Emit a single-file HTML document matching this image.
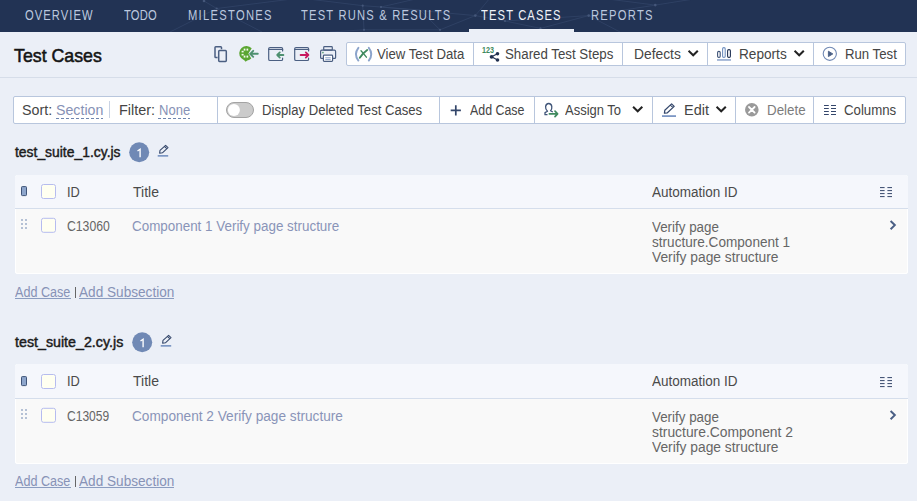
<!DOCTYPE html>
<html><head><meta charset="utf-8">
<style>
*{box-sizing:border-box;margin:0;padding:0}
html,body{width:917px;height:501px;overflow:hidden;background:#ebeff7;font-family:"Liberation Sans",sans-serif;color:#333}
#nav{position:absolute;left:0;top:0;width:917px;height:32px;background:#223354;overflow:hidden}
.t{position:absolute;white-space:nowrap;font-size:14px;line-height:16px;transform-origin:0 0}
.nv{color:#bcc8df;top:7px}
.act{color:#f0f3f9}
#ul{position:absolute;left:469px;top:29px;width:105px;height:3px;background:#ebeff7}
#sep{position:absolute;left:0;top:77px;width:917px;height:1px;background:#d6dde9}
.grp{position:absolute;background:#fff;border:1px solid #b8c6dd;border-radius:2px}
.dv{position:absolute;width:1px;background:#b8c6dd}
.tb{color:#454545}
.lnk{color:#8792b6}
.dash{position:absolute;height:1px;background:repeating-linear-gradient(90deg,#6f86b0 0 3px,transparent 3px 5px)}
.tbl{position:absolute;left:15px;width:893px;background:#f9f9f9;border-radius:3px;overflow:hidden;box-shadow:inset 1px 0 #fff,inset -1px 0 #fff,inset 0 -1px #fff}
.th{position:absolute;left:0;top:0;width:100%;height:33px;background:#f5f7fc;border-bottom:1px solid #d5deec}
.hd{color:#4a4a4a}
.gr{color:#666}
.cl{color:#8994b8}
.sh{font-size:14.5px;color:#1b1b1b;-webkit-text-stroke:0.45px #1b1b1b}
.ck{position:absolute;width:15px;height:15px;border:1px solid #b7bdee;background:#fffff2;border-radius:2px}
svg{position:absolute;overflow:visible}
.abs{position:absolute}
.ul2{height:1px;background:#8a9cc0}
</style></head><body>
<div id="nav">
  <svg style="left:0;top:0" width="917" height="32">
    <g stroke="#34466a" stroke-width="0.7" fill="none">
      <path d="M204 1 L216.7 8.5 L170 32 M216.7 8.5 L300 -2 M216.7 8.5 L262 32 M300 -2 L362.7 5.7 L381 7 L475.3 15.6 L505 21 L540.5 28.4 M362.7 5.7 L364 29.8 L440 29.8 L475.3 15.6 L490 -2 M381 7 L420 -2 M364 29.8 L330 32 M505 21 L588.7 15.6 L655.3 5.1 L700 -2 M588.7 15.6 L540.5 28.4 M588.7 15.6 L620 32 M655.3 5.1 L600 -2 M440 29.8 L420 10 L381 7"/>
    </g>
    <g fill="#45577a">
      <circle cx="204" cy="1" r="1.3"/><circle cx="216.7" cy="8.5" r="1.1"/><circle cx="362.7" cy="5.7" r="1.1"/><circle cx="381" cy="7" r="1.1"/><circle cx="364" cy="29.8" r="1.1"/><circle cx="475.3" cy="15.6" r="1.3"/><circle cx="505" cy="21" r="1.1"/><circle cx="540.5" cy="28.4" r="1.1"/><circle cx="588.7" cy="15.6" r="1.3"/><circle cx="655.3" cy="5.1" r="1.3"/><circle cx="440" cy="29.8" r="1.1"/>
    </g>
  </svg>
  <div class="t nv" style="left:25px;letter-spacing:1.34px;transform:scaleX(0.8)">OVERVIEW</div>
  <div class="t nv" style="left:124px;letter-spacing:0.23px;transform:scaleX(0.8)">TODO</div>
  <div class="t nv" style="left:188px;letter-spacing:1.6px;transform:scaleX(0.8)">MILESTONES</div>
  <div class="t nv" style="left:301px;letter-spacing:1.49px;transform:scaleX(0.8)">TEST RUNS &amp; RESULTS</div>
  <div class="t nv act" style="left:481px;letter-spacing:1.4px;transform:scaleX(0.8)">TEST CASES</div>
  <div class="t nv" style="left:591px;letter-spacing:1.58px;transform:scaleX(0.8)">REPORTS</div>
  <div id="ul"></div>
</div>
<div class="t" style="left:14px;top:45px;font-size:19px;line-height:21px;color:#141414;-webkit-text-stroke:0.55px #141414;transform:scaleX(0.935)">Test Cases</div>
<div id="sep"></div>

<!-- top button group -->
<div class="grp" style="left:346px;top:42px;width:560px;height:24px"></div>
<div class="dv" style="left:473px;top:43px;height:22px"></div>
<div class="dv" style="left:622px;top:43px;height:22px"></div>
<div class="dv" style="left:707px;top:43px;height:22px"></div>
<div class="dv" style="left:813px;top:43px;height:22px"></div>
<div class="t tb" style="left:377px;top:46px;transform:scaleX(0.94)">View Test Data</div>
<div class="t tb" style="left:505px;top:46px;transform:scaleX(0.949)">Shared Test Steps</div>
<div class="t tb" style="left:634px;top:46px;transform:scaleX(0.986)">Defects</div>
<div class="t tb" style="left:739px;top:46px;transform:scaleX(0.973)">Reports</div>
<div class="t tb" style="left:845px;top:46px;transform:scaleX(0.942)">Run Test</div>

<!-- toolbar 2 -->
<div class="grp" style="left:13px;top:96px;width:893px;height:28px"></div>
<div class="dv" style="left:109px;top:101px;height:17px;background:#c9d3e4"></div>
<div class="dv" style="left:217px;top:97px;height:26px"></div>
<div class="dv" style="left:439px;top:97px;height:26px"></div>
<div class="dv" style="left:534px;top:97px;height:26px"></div>
<div class="dv" style="left:652px;top:97px;height:26px"></div>
<div class="dv" style="left:735px;top:97px;height:26px"></div>
<div class="dv" style="left:813px;top:97px;height:26px"></div>
<div class="t tb" style="left:22px;top:102px;transform:scaleX(1.018)">Sort:</div>
<div class="t lnk" style="left:56px;top:102px;transform:scaleX(1.013)">Section</div>
<div class="dash" style="left:56px;top:118px;width:47px"></div>
<div class="t tb" style="left:119px;top:102px;transform:scaleX(1.03)">Filter:</div>
<div class="t lnk" style="left:159px;top:102px;transform:scaleX(0.93)">None</div>
<div class="dash" style="left:158px;top:118px;width:32px"></div>
<div class="t tb" style="left:262px;top:102px;transform:scaleX(0.937)">Display Deleted Test Cases</div>
<div class="t tb" style="left:470px;top:102px;transform:scaleX(0.885)">Add Case</div>
<div class="t tb" style="left:565px;top:102px;transform:scaleX(0.928)">Assign To</div>
<div class="t tb" style="left:684px;top:102px;transform:scaleX(1.033)">Edit</div>
<div class="t" style="left:767px;top:102px;color:#7c7c7c;transform:scaleX(0.953)">Delete</div>
<div class="t tb" style="left:844px;top:102px;transform:scaleX(0.945)">Columns</div>


<svg style="left:0;top:0;z-index:5" width="917" height="501">
 <!-- copy -->
 <g fill="none" stroke="#4b5f82" stroke-width="1.5" stroke-linecap="butt">
  <path d="M217.6 57.5 H215.8 Q215 57.5 215 56.7 V47.6 Q215 46.8 215.8 46.8 H220.7 Q221.5 46.8 221.5 47.6 V49.2"/>
  <rect x="218.7" y="50.6" width="7.6" height="10.8" rx="0.8"/>
 </g>
 <!-- cucumber -->
 <path d="M251.7 48.3 A7.2 7.2 0 1 0 251.3 58.5 L248.4 53.6 Z" fill="#5ba632"/>
 <path d="M243.6 59.4 L245.6 61.7 L248.6 59.2 Z" fill="#5ba632"/>
 <g fill="#f4faee"><rect x="243.7" y="48.6" width="1.7" height="2"/><rect x="246.5" y="48.6" width="1.7" height="2"/><rect x="241.6" y="50.8" width="2" height="1.6"/><rect x="241.6" y="53.9" width="2" height="1.6"/><rect x="243.7" y="55.6" width="1.7" height="2"/><rect x="246.5" y="55.6" width="1.7" height="2"/></g>
 <g fill="none" stroke="#4e9070" stroke-width="1.9" stroke-linecap="round" stroke-linejoin="round"><path d="M257.8 53.8 H250.4 M253.2 50.8 L250.2 53.8 L253.2 56.8"/></g>
 <!-- import -->
 <g fill="none" stroke="#4b5f82" stroke-width="1.2" stroke-linecap="round">
  <path d="M282.6 51 V48.8 Q282.6 47.5 281.3 47.5 H270 Q268.7 47.5 268.7 48.8 V59.2 Q268.7 60.5 270 60.5 H281.3 Q282.6 60.5 282.6 59.2 V58.2"/>
  <path d="M268.7 49.4 H282.6"/>
 </g>
 <g fill="none" stroke="#4e9070" stroke-width="1.8" stroke-linecap="round" stroke-linejoin="round"><path d="M283.4 55 H277.2 M279.8 52.4 L277.2 55 L279.8 57.6"/></g>
 <!-- export -->
 <g fill="none" stroke="#4b5f82" stroke-width="1.2" stroke-linecap="round">
  <path d="M308.6 51 V48.8 Q308.6 47.5 307.3 47.5 H296 Q294.7 47.5 294.7 48.8 V59.2 Q294.7 60.5 296 60.5 H307.3 Q308.6 60.5 308.6 59.2 V58.2"/>
  <path d="M294.7 49.4 H308.6"/>
 </g>
 <g fill="none" stroke="#c8175f" stroke-width="1.8" stroke-linecap="round" stroke-linejoin="round"><path d="M300.6 55 H308.4 M305.8 52.4 L308.4 55 L305.8 57.6"/></g>
 <!-- printer -->
 <g fill="none" stroke="#4b5f82" stroke-width="1.2" stroke-linejoin="round">
  <rect x="323.7" y="46.6" width="8.6" height="3.6" rx="0.8"/>
  <path d="M323.4 58.4 H321.6 Q320.6 58.4 320.6 57.4 V51.4 Q320.6 50.2 321.8 50.2 H334.4 Q335.6 50.2 335.6 51.4 V57.4 Q335.6 58.4 334.6 58.4 H332.6"/>
  <rect x="323.4" y="55.2" width="9.2" height="6.2" rx="0.8" fill="#fff"/>
 </g>
 <path d="M325.3 57.8 H330.7 M325.3 59.6 H330.7" stroke="#7b96c4" stroke-width="0.9"/>
 <path d="M322 52.6 H323.8 M322.9 51.7 V53.5" stroke="#5aa07a" stroke-width="0.8"/>
 <!-- (x) -->
 <g fill="none" stroke="#8ca4cb" stroke-width="1.9" stroke-linecap="round">
  <path d="M358.4 47.8 Q353.4 54.2 358.4 60.6"/><path d="M368.8 47.8 Q373.8 54.2 368.8 60.6"/>
 </g>
 <path d="M359.8 57.8 Q363.5 52.5 367.2 50" fill="none" stroke="#3f8a5e" stroke-width="1.9" stroke-linecap="round"/>
 <path d="M361 50.8 Q363.5 53.5 366.4 57.2" fill="none" stroke="#3f8a5e" stroke-width="1.3" stroke-linecap="round"/>
 <!-- 123 share -->
 <text x="482" y="53.2" font-family="Liberation Sans" font-weight="bold" font-size="8.4" fill="#3f8a5e" textLength="12" lengthAdjust="spacingAndGlyphs">123</text>
 <g stroke="#1f2e4e" stroke-width="1.1"><path d="M491.6 56.8 L497.5 53.7 M491.6 56.8 L497.5 60"/></g>
 <g fill="#1f2e4e"><circle cx="491.6" cy="56.8" r="1.9"/><circle cx="497.5" cy="53.7" r="1.8"/><circle cx="497.5" cy="60" r="1.8"/></g>
 <!-- chevrons -->
 <g fill="none" stroke="#222" stroke-width="2" stroke-linecap="square" stroke-linejoin="miter">
  <path d="M689.3 51.4 L693.2 55.3 L697.1 51.4"/>
  <path d="M795.3 51.4 L799.2 55.3 L803.1 51.4"/>
  <path d="M633.8 107.4 L637.7 111.3 L641.6 107.4"/>
  <path d="M717.3 107.4 L721.2 111.3 L725.1 107.4"/>
 </g>
 <!-- reports bars -->
 <rect x="717.6" y="51.4" width="2.6" height="6" rx="1.2" fill="none" stroke="#3f5478" stroke-width="1.1"/>
 <rect x="722.6" y="47.6" width="2.6" height="9.8" rx="1.2" fill="none" stroke="#7090c0" stroke-width="1.1"/>
 <rect x="727.6" y="49.6" width="2.8" height="7.8" rx="1.2" fill="none" stroke="#223354" stroke-width="1.1"/>
 <rect x="717" y="59.2" width="14" height="1.5" fill="#8aa3cc"/>
 <!-- play -->
 <circle cx="829.8" cy="53.8" r="6.6" fill="none" stroke="#7189b4" stroke-width="1.1"/>
 <path d="M828.4 51.2 L832.8 53.9 L828.4 56.6 Z" fill="#4a5f85" stroke="#4a5f85" stroke-width="0.9" stroke-linejoin="round"/>
 <!-- toggle -->
 <rect x="226.5" y="102.5" width="27" height="15" rx="7.5" fill="#cbcbcb" stroke="#a3a3a3" stroke-width="1"/>
 <circle cx="233.9" cy="110" r="6" fill="#fff"/>
 <!-- plus -->
 <path d="M455.8 105.3 V115.5 M450.7 110.4 H460.9" stroke="#33466a" stroke-width="1.7"/>
 <!-- assign -->
 <g fill="none" stroke="#3f5478" stroke-width="1.3" stroke-linecap="round" stroke-linejoin="round">
  <path d="M547 114.7 H545 V112.6 L547.5 111.2 Q545.3 109.3 545.6 106.6 Q546 103.5 548.7 103.5 Q551.4 103.5 551.8 106.6 Q552.1 109.3 550.6 110.7 L552.4 111.7"/>
 </g>
 <g fill="none" stroke="#3f8a5e" stroke-width="1.7" stroke-linecap="round" stroke-linejoin="round"><path d="M549.4 113.8 H557.4 M555 111.2 L557.6 113.8 L555 116.6"/></g>
 <!-- edit pencil -->
 <g fill="none" stroke="#33466a" stroke-width="1.2" stroke-linejoin="round">
  <path d="M664.4 113.2 L664.8 110.3 L671.6 103.9 L674.2 106.4 L667.4 112.8 Z M670.4 105.1 L673 107.6"/>
 </g>
 <rect x="662" y="115.2" width="14" height="1.8" fill="#7d97c4"/>
 <!-- delete -->
 <circle cx="751.8" cy="109.8" r="6.8" fill="#9a9a9a"/>
 <path d="M749 107 L754.6 112.6 M754.6 107 L749 112.6" stroke="#fff" stroke-width="1.8" stroke-linecap="round"/>
 <!-- columns -->
 <g stroke="#34466b" stroke-width="1">
  <path d="M824 105.5 H828.8 M831 105.5 H836 M824 108.5 H828.8 M831 108.5 H836 M824 111.5 H828.8 M831 111.5 H836 M824 114.5 H828.8 M831 114.5 H836"/>
 </g>
</svg>

<!-- section 1 -->
<div class="t sh" style="left:15px;top:144px;transform:scaleX(0.958)">test_suite_1.cy.js</div>
<div class="tbl" style="top:175px;height:99px">
  <div class="th" style="height:34px"></div>
</div>
<div class="t hd" style="left:67px;top:184px;transform:scaleX(0.915)">ID</div>
<div class="t hd" style="left:133px;top:184px;transform:scaleX(1.0)">Title</div>
<div class="t hd" style="left:652px;top:184px;transform:scaleX(0.965)">Automation ID</div>
<div class="t gr" style="left:67px;top:218px;transform:scaleX(0.873)">C13060</div>
<div class="t cl" style="left:132px;top:218px;transform:scaleX(0.958)">Component 1 Verify page structure</div>
<div class="t gr" style="left:652px;top:218.5px;transform:scaleX(0.955)">Verify page</div>
<div class="t gr" style="left:652px;top:233.5px;transform:scaleX(0.97)">structure.Component 1</div>
<div class="t gr" style="left:652px;top:248.9px;transform:scaleX(0.985)">Verify page structure</div>
<div class="t lnk" style="left:15px;top:284px;transform:scaleX(0.9)">Add Case</div>
<div class="t lnk" style="left:79px;top:284px;transform:scaleX(0.972)">Add Subsection</div>


<svg style="left:0;top:0;z-index:5" width="917" height="501">
 <circle cx="139.2" cy="152.3" r="10" fill="#7089b5"/>
 <path d="M137.5 151.0 L140.1 149.2 V157.2" fill="none" stroke="#fff" stroke-width="1.35" stroke-linejoin="miter"/>
 <g transform="translate(0,0)">
  <g fill="none" stroke="#33466a" stroke-width="1.05" stroke-linejoin="round">
   <path d="M159.6 153.2 L160 150.4 L165.6 145.3 L168 147.6 L162.4 152.8 Z M164.4 146.4 L166.8 148.7"/>
  </g>
  <rect x="157.7" y="155" width="10.5" height="1.7" fill="#7d97c4"/>
 </g>
 <g transform="translate(0,0)">
  <rect x="21.5" y="186.6" width="5" height="9" rx="0.8" fill="#8ea6cc" stroke="#3f5478" stroke-width="1"/>
  <g fill="#b5c1d5"><rect x="21" y="219" width="2" height="2"/><rect x="25" y="219" width="2" height="2"/><rect x="21" y="223" width="2" height="2"/><rect x="25" y="223" width="2" height="2"/><rect x="21" y="227" width="2" height="2"/><rect x="25" y="227" width="2" height="2"/></g>
  <rect x="41.5" y="184.5" width="14" height="14" rx="2" fill="#fffff1" stroke="#b6bcef" stroke-width="1"/>
  <rect x="41.5" y="218.3" width="14" height="14" rx="2" fill="#fffff1" stroke="#b6bcef" stroke-width="1"/>
  <g stroke="#34466b" stroke-width="1"><path d="M880 187.6 H884.6 M887.4 187.6 H892 M880 190.6 H884.6 M887.4 190.6 H892 M880 193.6 H884.6 M887.4 193.6 H892 M880 196.6 H884.6 M887.4 196.6 H892"/></g>
  <path d="M890.6 221 L894.8 225.1 L890.6 229.2" fill="none" stroke="#4a5f85" stroke-width="2"/>
 </g>
</svg>
<div class="abs ul2" style="left:15px;top:298px;width:56px"></div>
<div class="abs ul2" style="left:79px;top:298px;width:95px"></div>
<div class="abs" style="left:74.5px;top:287px;width:1.2px;height:11px;background:#666"></div>
<!-- section 2 -->
<div class="t sh" style="left:15px;top:334px;transform:scaleX(0.983)">test_suite_2.cy.js</div>
<div class="tbl" style="top:364px;height:100px">
  <div class="th" style="height:35px"></div>
</div>
<div class="t hd" style="left:67px;top:373px;transform:scaleX(0.915)">ID</div>
<div class="t hd" style="left:133px;top:373px;transform:scaleX(1.0)">Title</div>
<div class="t hd" style="left:652px;top:373px;transform:scaleX(0.965)">Automation ID</div>
<div class="t gr" style="left:67px;top:408px;transform:scaleX(0.86)">C13059</div>
<div class="t cl" style="left:132px;top:408px;transform:scaleX(0.975)">Component 2 Verify page structure</div>
<div class="t gr" style="left:652px;top:408.5px;transform:scaleX(0.955)">Verify page</div>
<div class="t gr" style="left:652px;top:423.5px;transform:scaleX(0.99)">structure.Component 2</div>
<div class="t gr" style="left:652px;top:438.9px;transform:scaleX(0.985)">Verify page structure</div>
<div class="t lnk" style="left:15px;top:473px;transform:scaleX(0.9)">Add Case</div>
<div class="t lnk" style="left:79px;top:473px;transform:scaleX(0.972)">Add Subsection</div>

<svg style="left:0;top:0;z-index:5" width="917" height="501">
 <circle cx="142.2" cy="342.3" r="10" fill="#7089b5"/>
 <path d="M140.5 341.0 L143.1 339.2 V347.2" fill="none" stroke="#fff" stroke-width="1.35" stroke-linejoin="miter"/>
 <g transform="translate(3,190)">
  <g fill="none" stroke="#33466a" stroke-width="1.05" stroke-linejoin="round">
   <path d="M159.6 153.2 L160 150.4 L165.6 145.3 L168 147.6 L162.4 152.8 Z M164.4 146.4 L166.8 148.7"/>
  </g>
  <rect x="157.7" y="155" width="10.5" height="1.7" fill="#7d97c4"/>
 </g>
 <g transform="translate(0,190)">
  <rect x="21.5" y="186.6" width="5" height="9" rx="0.8" fill="#8ea6cc" stroke="#3f5478" stroke-width="1"/>
  <g fill="#b5c1d5"><rect x="21" y="219" width="2" height="2"/><rect x="25" y="219" width="2" height="2"/><rect x="21" y="223" width="2" height="2"/><rect x="25" y="223" width="2" height="2"/><rect x="21" y="227" width="2" height="2"/><rect x="25" y="227" width="2" height="2"/></g>
  <rect x="41.5" y="184.5" width="14" height="14" rx="2" fill="#fffff1" stroke="#b6bcef" stroke-width="1"/>
  <rect x="41.5" y="218.3" width="14" height="14" rx="2" fill="#fffff1" stroke="#b6bcef" stroke-width="1"/>
  <g stroke="#34466b" stroke-width="1"><path d="M880 187.6 H884.6 M887.4 187.6 H892 M880 190.6 H884.6 M887.4 190.6 H892 M880 193.6 H884.6 M887.4 193.6 H892 M880 196.6 H884.6 M887.4 196.6 H892"/></g>
  <path d="M890.6 221 L894.8 225.1 L890.6 229.2" fill="none" stroke="#4a5f85" stroke-width="2"/>
 </g>
</svg>
<div class="abs ul2" style="left:15px;top:487px;width:56px"></div>
<div class="abs ul2" style="left:79px;top:487px;width:95px"></div>
<div class="abs" style="left:74.5px;top:476px;width:1.2px;height:11px;background:#666"></div>
</body></html>
